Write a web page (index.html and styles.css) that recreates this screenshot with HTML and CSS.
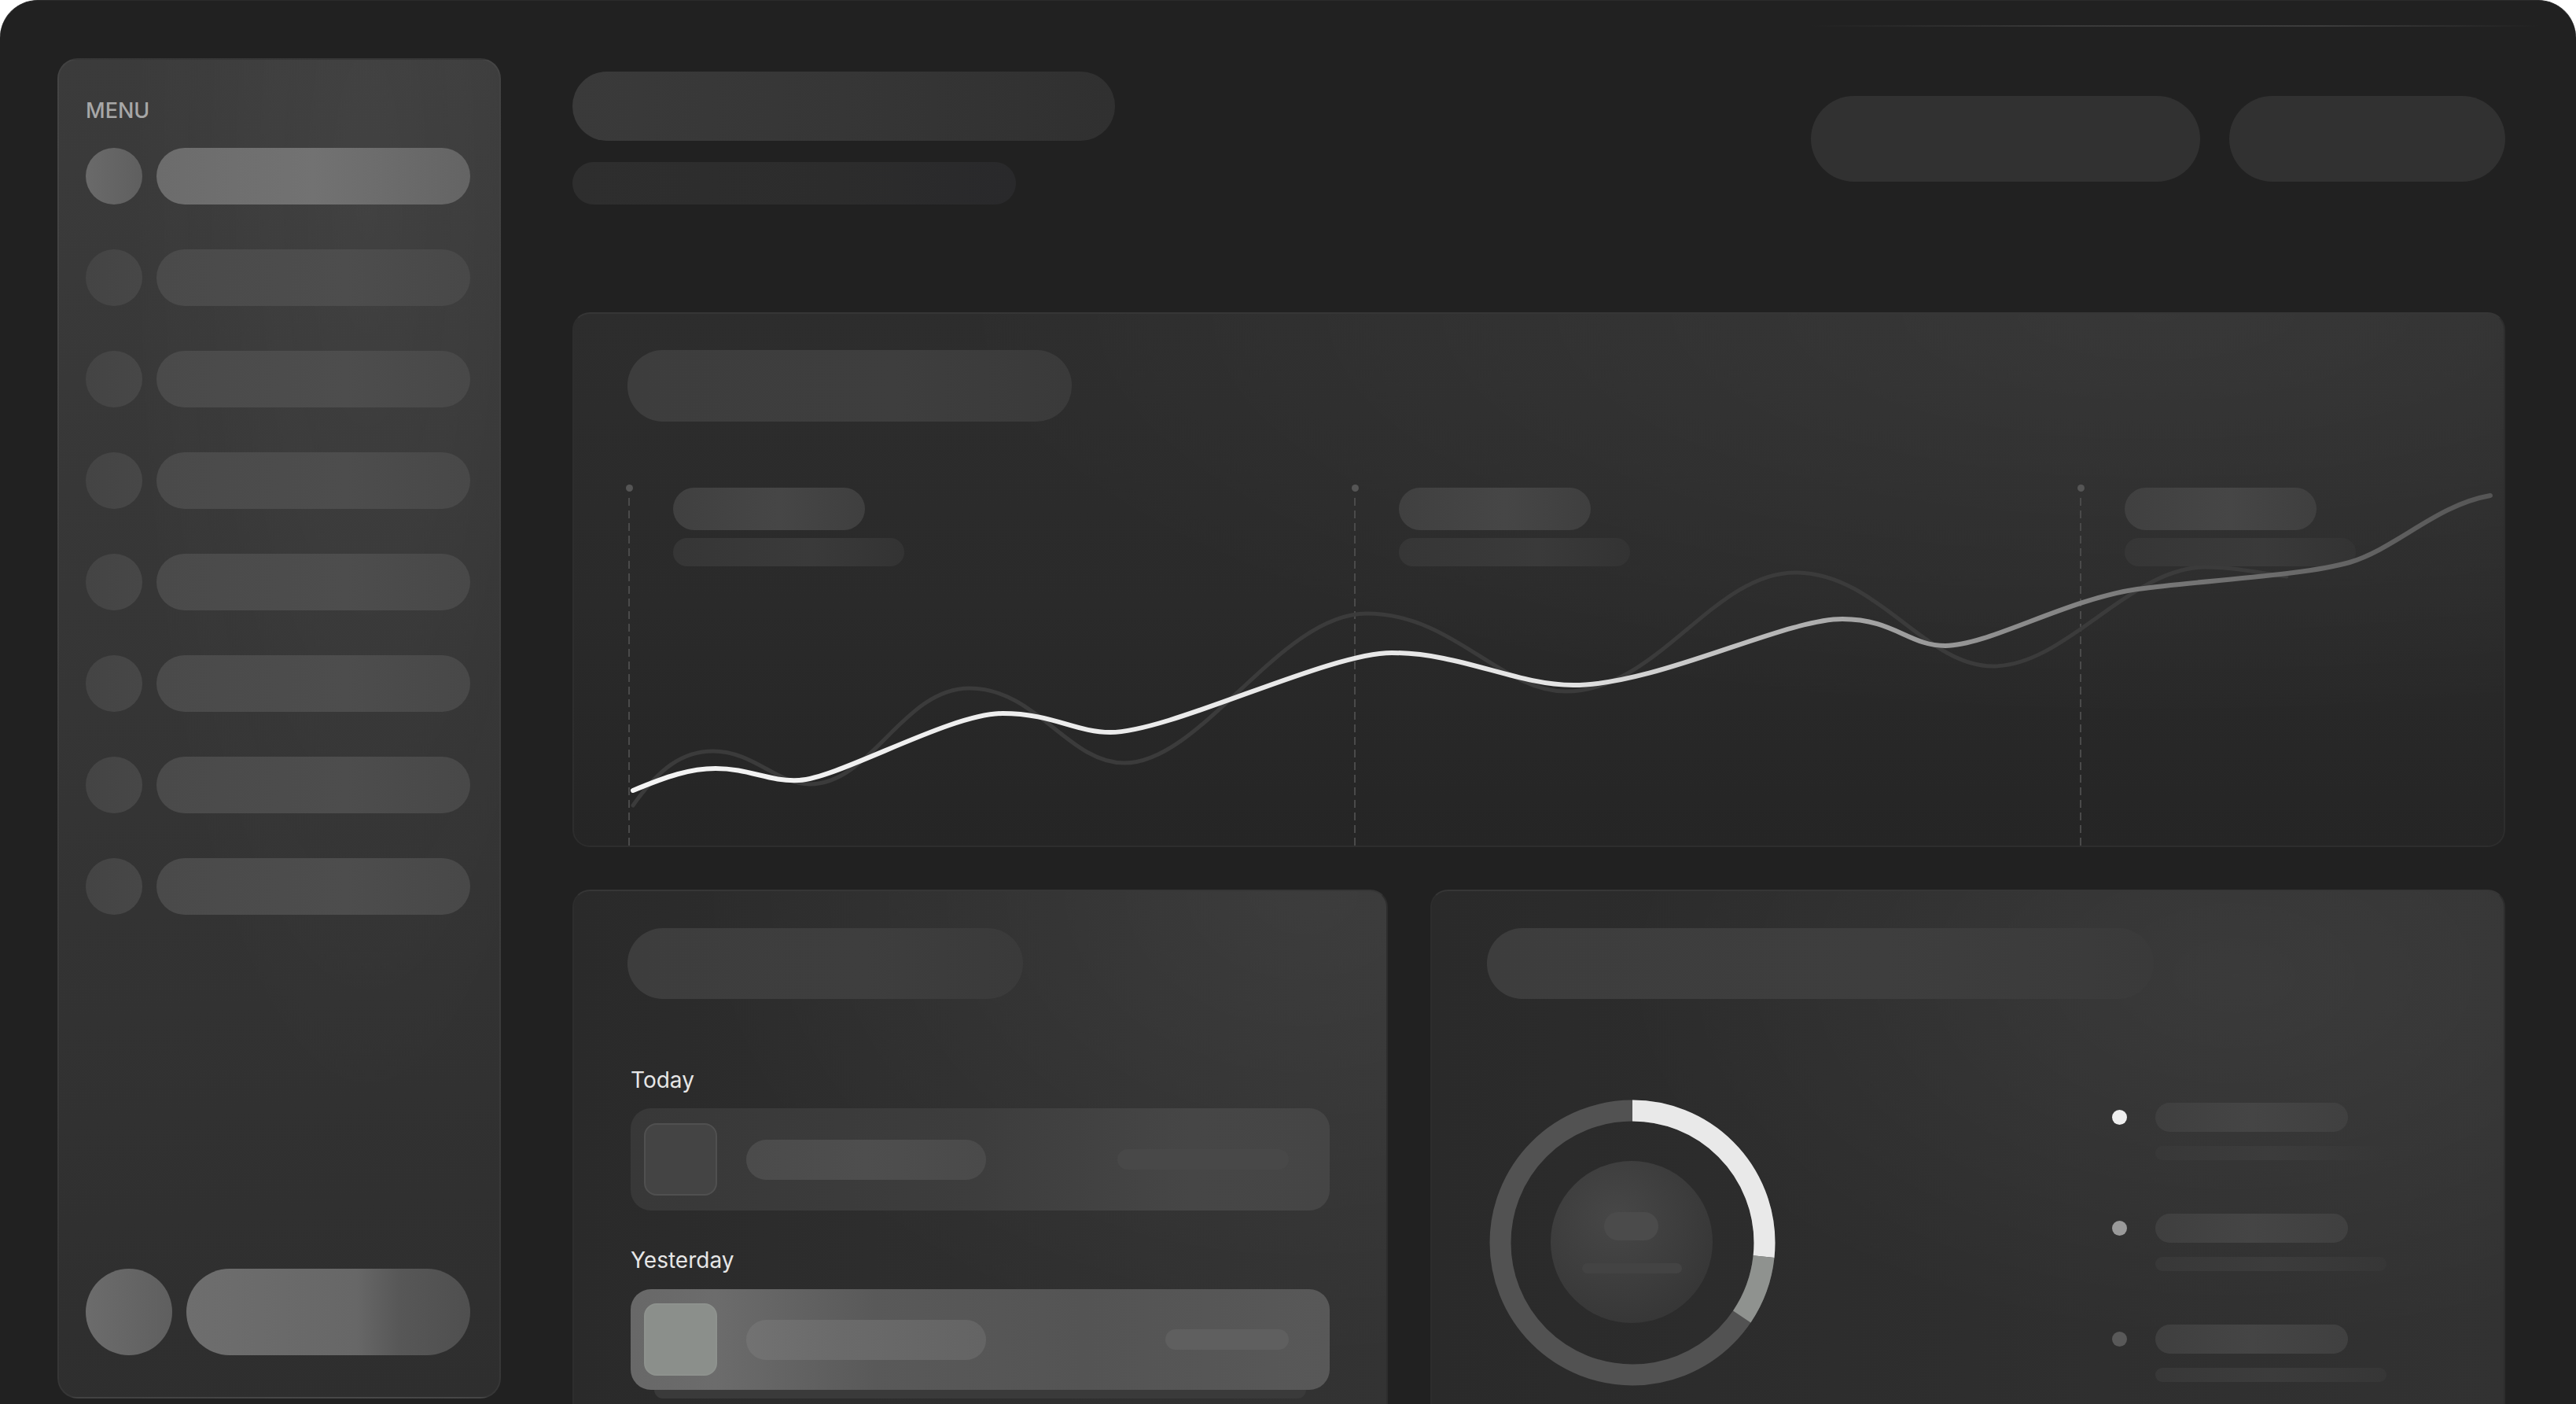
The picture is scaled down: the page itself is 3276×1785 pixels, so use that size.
FILE: index.html
```html
<!DOCTYPE html>
<html lang="en">
<head>
    <meta charset="UTF-8">
    <meta name="viewport" content="width=device-width, initial-scale=1.0">
    <title>Dashboard</title>
    <link rel="stylesheet" href="styles.css">
</head>
<body>
    <div class="frame">
        <aside class="sidebar">
            <div class="menu-title">MENU</div>
            <div class="menu-list">
                <div class="menu-item active"><span class="menu-icon"></span><span class="menu-label"></span></div>
                <div class="menu-item"><span class="menu-icon"></span><span class="menu-label"></span></div>
                <div class="menu-item"><span class="menu-icon"></span><span class="menu-label"></span></div>
                <div class="menu-item"><span class="menu-icon"></span><span class="menu-label"></span></div>
                <div class="menu-item"><span class="menu-icon"></span><span class="menu-label"></span></div>
                <div class="menu-item"><span class="menu-icon"></span><span class="menu-label"></span></div>
                <div class="menu-item"><span class="menu-icon"></span><span class="menu-label"></span></div>
                <div class="menu-item"><span class="menu-icon"></span><span class="menu-label"></span></div>
            </div>
            <div class="profile">
                <span class="profile-avatar"></span>
                <span class="profile-name"></span>
            </div>
        </aside>

        <main class="main">
            <header class="header">
                <div class="header-text">
                    <div class="page-title"></div>
                    <div class="page-subtitle"></div>
                </div>
                <div class="header-actions">
                    <div class="btn btn-wide"></div>
                    <div class="btn"></div>
                </div>
            </header>

            <section class="card chart-card">
                <div class="card-title chart-title"></div>
                <div class="chart-cols">
                    <div class="chart-col">
                        <div class="guide"><span class="guide-dot"></span><span class="guide-line"></span></div>
                        <div class="stat"><span class="stat-value"></span><span class="stat-label"></span></div>
                    </div>
                    <div class="chart-col">
                        <div class="guide"><span class="guide-dot"></span><span class="guide-line"></span></div>
                        <div class="stat"><span class="stat-value"></span><span class="stat-label"></span></div>
                    </div>
                    <div class="chart-col last">
                        <div class="guide"><span class="guide-dot"></span><span class="guide-line"></span></div>
                        <div class="stat"><span class="stat-value"></span><span class="stat-label"></span></div>
                    </div>
                </div>
                <svg class="chart-lines" width="2458" height="680" viewBox="0 0 2458 680">
                    <defs>
                        <linearGradient id="main-line" gradientUnits="userSpaceOnUse" x1="77" y1="0" x2="2439" y2="0">
                            <stop offset="0" stop-color="#f4f4f4"/>
                            <stop offset="0.5" stop-color="#e4e4e4"/>
                            <stop offset="0.65" stop-color="#a8a8a8"/>
                            <stop offset="0.8" stop-color="#7c7c7c"/>
                            <stop offset="1" stop-color="#555"/>
                        </linearGradient>
                    </defs>
                    <path class="line-dim" d="M77,627 C110,580 140,558 179,558 C230,558 260,600 302,600 C380,600 420,478 505,478 C590,478 630,573 702,573 C800,573 900,383 1010,383 C1120,383 1180,482 1263,482 C1380,482 1450,331 1555,331 C1660,331 1720,450 1806,450 C1900,450 1980,324 2077,324 C2120,324 2150,333 2180,336"/>
                    <path class="line-main" d="M77,608 C120,590 150,580 182,580 C225,580 250,597 288,595 C340,592 480,510 547,510 C610,510 640,534 684,534 C760,534 960,433 1042,433 C1130,433 1200,474 1273,474 C1380,474 1540,390 1615,390 C1680,390 1700,424 1746,424 C1800,424 1900,365 1990,352 C2080,340 2200,335 2260,318 C2320,300 2370,245 2439,233"/>
                </svg>
            </section>

            <div class="bottom-row">
                <section class="card activity-card">
                    <div class="card-title activity-title"></div>
                    <div class="activity">
                        <div class="day-label">Today</div>
                        <div class="activity-row">
                            <span class="row-thumb"></span>
                            <span class="row-name"></span>
                            <span class="row-meta"></span>
                        </div>
                        <div class="day-label">Yesterday</div>
                        <div class="activity-row highlight">
                            <span class="row-thumb"></span>
                            <span class="row-name"></span>
                            <span class="row-meta"></span>
                        </div>
                        <div class="row-stack"></div>
                    </div>
                </section>

                <section class="card breakdown-card">
                    <div class="card-title breakdown-title"></div>
                    <div class="breakdown">
                        <svg class="donut" width="364" height="364" viewBox="0 0 364 364">
                            <defs>
                                <radialGradient id="core" cx="0.4" cy="0.35" r="0.7">
                                    <stop offset="0" stop-color="#474747"/>
                                    <stop offset="1" stop-color="#363636"/>
                                </radialGradient>
                            </defs>
                            <circle cx="182" cy="182" r="168" fill="none" stroke="#525252" stroke-width="27"/>
                            <circle cx="182" cy="182" r="168" fill="none" stroke="#e9e9e9" stroke-width="27"
                                    stroke-dasharray="281.5 1055.6" transform="rotate(-90 182 182)"/>
                            <circle cx="182" cy="182" r="168" fill="none" stroke="#8f928f" stroke-width="27"
                                    stroke-dasharray="82 1055.6" stroke-dashoffset="-281.5" transform="rotate(-90 182 182)"/>
                            <circle cx="181" cy="181" r="103" fill="url(#core)"/>
                            <rect x="146" y="143" width="69" height="36" rx="18" fill="#4b4b4b"/>
                            <rect x="118" y="208" width="127" height="13" rx="6.5" fill="#434343"/>
                        </svg>
                        <ul class="legend">
                            <li class="legend-item"><span class="legend-dot dot-1"></span><span class="legend-text"><span class="legend-value"></span><span class="legend-label"></span></span></li>
                            <li class="legend-item"><span class="legend-dot dot-2"></span><span class="legend-text"><span class="legend-value"></span><span class="legend-label"></span></span></li>
                            <li class="legend-item"><span class="legend-dot dot-3"></span><span class="legend-text"><span class="legend-value"></span><span class="legend-label"></span></span></li>
                        </ul>
                    </div>
                </section>
            </div>
        </main>
    </div>
</body>
</html>
```

FILE: styles.css
```css
body {
    margin: 0;
    background: #ffffff;
    font-family: Inter, "Liberation Sans", sans-serif;
}
.frame {
    position: relative;
    box-sizing: border-box;
    width: 3276px;
    height: 1785px;
    overflow: hidden;
    display: flex;
    gap: 91px;
    padding: 73px 90px 0 73px;
    background: #212121;
    border-radius: 48px 48px 0 0;
    border-top: 1px solid #2b2b2b;
}
.frame::before {
    content: "";
    position: absolute;
    top: 31px;
    left: 2303px;
    width: 926px;
    height: 2px;
    background: linear-gradient(90deg, transparent, #393939 35%, #3c3c3c 70%, transparent);
}

/* sidebar */
.sidebar {
    box-sizing: border-box;
    width: 564px;
    height: 1704px;
    flex: none;
    display: flex;
    flex-direction: column;
    padding: 48px 37px 53px 34px;
    border: 2px solid rgba(255,255,255,0.04);
    border-radius: 26px;
    background:
        radial-gradient(ellipse at 70% 10%, rgba(255,255,255,0.04), transparent 55%),
        linear-gradient(175deg, #3b3b3b, #343434 55%, #2e2e2e);
}
.menu-title {
    font-size: 27px;
    line-height: 34px;
    font-weight: 500;
    color: #a7a7a7;
}
.menu-list {
    margin-top: 30px;
    display: flex;
    flex-direction: column;
    gap: 57px;
}
.menu-item {
    display: flex;
    align-items: center;
    gap: 18px;
}
.menu-icon {
    width: 72px;
    height: 72px;
    flex: none;
    border-radius: 50%;
    background: linear-gradient(90deg, #444, #474747);
}
.menu-label {
    flex: 1;
    height: 72px;
    border-radius: 36px;
    background: linear-gradient(90deg, #4a4a4a, #4d4d4d 60%, #484848);
}
.menu-item.active .menu-icon {
    background: linear-gradient(90deg, #6a6a6a, #5f5f5f);
}
.menu-item.active .menu-label {
    background: linear-gradient(90deg, #6c6c6c, #727272 50%, #6a6a6a 80%, #646464);
}
.profile {
    margin-top: auto;
    display: flex;
    align-items: center;
    gap: 18px;
}
.profile-avatar {
    width: 110px;
    height: 110px;
    flex: none;
    border-radius: 50%;
    background: linear-gradient(90deg, #6c6c6c, #5f5f5f);
}
.profile-name {
    flex: 1;
    height: 110px;
    border-radius: 55px;
    background: linear-gradient(90deg, #6e6e6e, #676767 60%, #575757 75%, #4f4f4f);
}

/* main */
.main {
    flex: 1;
    min-width: 0;
    display: flex;
    flex-direction: column;
}
.header {
    flex: none;
    display: flex;
    justify-content: space-between;
    align-items: flex-start;
    padding-top: 17px;
}
.page-title {
    width: 690px;
    height: 88px;
    border-radius: 44px;
    background: linear-gradient(90deg, #3a3a3a, #363636 50%, #303030);
}
.page-subtitle {
    width: 564px;
    height: 54px;
    margin-top: 27px;
    border-radius: 27px;
    background: linear-gradient(90deg, #2e2e2e, #2c2c2c 60%, #29292b);
}
.header-actions {
    display: flex;
    gap: 37px;
    margin-top: 31px;
}
.btn {
    width: 351px;
    height: 109px;
    border-radius: 55px;
    background: #313131;
}
.btn-wide {
    width: 495px;
}

/* cards */
.card {
    position: relative;
    box-sizing: border-box;
    overflow: hidden;
    border: 2px solid #2d2d2d;
    border-top-color: #363636;
    border-radius: 22px;
}
.card-title {
    height: 90px;
    border-radius: 45px;
    background: linear-gradient(90deg, #3d3d3d, #3e3e3e 60%, #3a3a3a);
}
.chart-card {
    flex: none;
    height: 680px;
    margin-top: 137px;
    display: flex;
    flex-direction: column;
    padding: 46px 0 0 68px;
    background:
        radial-gradient(ellipse at 82% 0%, rgba(255,255,255,0.05), transparent 55%),
        linear-gradient(180deg, #2d2d2d, #2a2a2a 55%, #252525);
}
.chart-title {
    width: 565px;
    height: 91px;
}
.chart-cols {
    flex: 1;
    display: flex;
    margin: 80px 0 0 -3px;
}
.chart-col {
    width: 923px;
    flex: none;
    display: flex;
}
.chart-col.last {
    flex: 1;
    width: auto;
}
.guide {
    width: 10px;
    display: flex;
    flex-direction: column;
    align-items: center;
}
.guide-dot {
    width: 9px;
    height: 9px;
    border-radius: 50%;
    background: #555;
}
.guide-line {
    flex: 1;
    width: 2px;
    margin-top: 8px;
    background: repeating-linear-gradient(to bottom, #4a4a4a 0 10px, transparent 10px 16px);
}
.stat {
    display: flex;
    flex-direction: column;
    gap: 10px;
    margin-left: 51px;
    padding-top: 4px;
}
.stat-value {
    width: 244px;
    height: 54px;
    border-radius: 27px;
    background: linear-gradient(90deg, #404040, #464646 55%, #3f3f3f);
}
.stat-label {
    width: 294px;
    height: 36px;
    border-radius: 18px;
    background: linear-gradient(90deg, #363636, #3a3a3a 60%, #333);
}
.chart-lines {
    position: absolute;
    top: -2px;
    left: -2px;
    pointer-events: none;
}
.chart-lines path {
    fill: none;
    stroke-linecap: round;
}
.line-dim {
    stroke: #3b3b3b;
    stroke-width: 5;
}
.line-main {
    stroke: url(#main-line);
    stroke-width: 6;
}

/* bottom cards */
.bottom-row {
    flex: none;
    display: flex;
    gap: 54px;
    margin-top: 54px;
}
.activity-card {
    width: 1037px;
    flex: none;
    height: 720px;
    padding: 47px 0 0 68px;
    background:
        radial-gradient(ellipse at 90% 0%, rgba(255,255,255,0.05), transparent 60%),
        linear-gradient(90deg, #2a2a2a, #2f2f2f 60%, #333);
}
.activity-title {
    width: 503px;
}
.activity {
    width: 889px;
    margin: 86px 0 0 4px;
}
.day-label {
    font-size: 28px;
    line-height: 34px;
    color: #e6e6e6;
}
.activity-row {
    box-sizing: border-box;
    height: 130px;
    margin: 19px 0 46px;
    display: flex;
    align-items: center;
    padding: 0 52px 0 17px;
    border-radius: 26px;
    background: linear-gradient(90deg, #383838, #3d3d3d 50%, #464646 80%, #454545);
}
.row-thumb {
    width: 93px;
    height: 92px;
    flex: none;
    box-sizing: border-box;
    border: 2px solid #505050;
    border-radius: 16px;
    background: #444;
}
.row-name {
    width: 305px;
    height: 51px;
    margin-left: 37px;
    border-radius: 26px;
    background: linear-gradient(90deg, #4b4b4b, #4e4e4e 50%, #4a4a4a);
}
.row-meta {
    width: 218px;
    height: 26px;
    margin-left: auto;
    border-radius: 13px;
    background: #484848;
}
.activity-row.highlight {
    height: 128px;
    margin: 20px 0 0;
    background: linear-gradient(90deg, #686868, #6c6c6c 12%, #595959 35%, #545454 65%, #585858);
}
.activity-row.highlight .row-thumb {
    border-color: #8e928e;
    background: #8b8f8b;
}
.activity-row.highlight .row-name {
    background: linear-gradient(90deg, #727272, #6a6a6a 40%, #646464);
}
.activity-row.highlight .row-meta {
    width: 157px;
    background: #5f5f5f;
}
.row-stack {
    height: 11px;
    margin: 0 30px;
    border-radius: 0 0 16px 16px;
    background: #3a3a3a;
}
.breakdown-card {
    flex: 1;
    height: 720px;
    padding: 47px 0 0 70px;
    background:
        radial-gradient(ellipse at 75% 15%, rgba(255,255,255,0.05), transparent 55%),
        linear-gradient(90deg, #2a2a2a, #2e2e2e 50%, #323232);
}
.breakdown-title {
    width: 848px;
}
.breakdown {
    display: flex;
    align-items: flex-start;
    margin: 128px 0 0 3px;
}
.donut {
    flex: none;
}
.legend {
    list-style: none;
    margin: 4px 0 0 428px;
    padding: 0;
    display: flex;
    flex-direction: column;
    gap: 68px;
}
.legend-item {
    display: flex;
    align-items: flex-start;
    gap: 36px;
}
.legend-dot {
    width: 19px;
    height: 19px;
    margin-top: 9px;
    border-radius: 50%;
}
.dot-1 { background: #efefef; }
.dot-2 { background: #9a9a9a; }
.dot-3 { background: #595959; }
.legend-text {
    display: flex;
    flex-direction: column;
    gap: 18px;
}
.legend-value {
    width: 245px;
    height: 37px;
    border-radius: 19px;
    background: linear-gradient(90deg, #3f3f3f, #454545 50%, #404040);
}
.legend-label {
    width: 294px;
    height: 18px;
    border-radius: 9px;
    background: linear-gradient(90deg, #383838, #3c3c3c 50%, #363636);
}
```
